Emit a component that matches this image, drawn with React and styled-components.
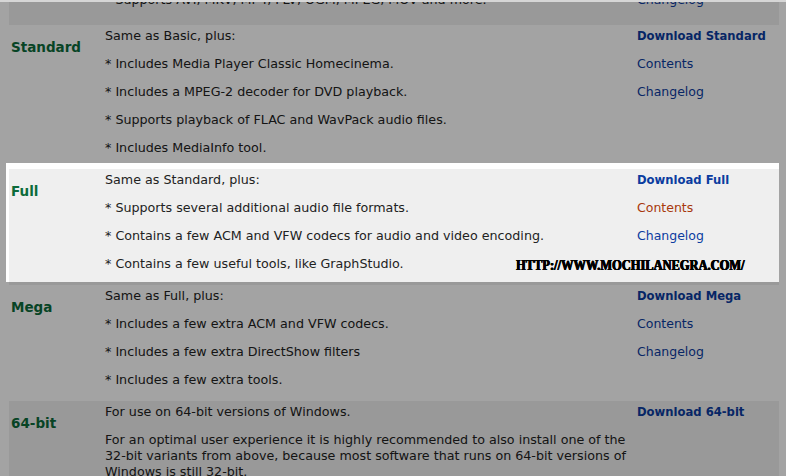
import React from "react";
import styled, { createGlobalStyle } from "styled-components";

const GlobalStyle = createGlobalStyle`
  html, body {
    margin: 0;
    padding: 0;
    background: #ffffff;
  }
  body {
    font-family: "DejaVu Sans", Verdana, sans-serif;
    color: #222222;
  }
`;

const packs = [
  {
    name: "Basic",
    alt: true,
    lines: [
      "Contains all the essential decoders and tools that are needed.",
      "* Plays the most common audio and video file formats.",
      "* Supports AVI, MKV, MP4, FLV, OGM, MPEG, MOV and more.",
    ],
    links: [
      { text: "Download Basic", bold: true },
      { text: "Contents" },
      { text: "Changelog" },
    ],
  },
  {
    name: "Standard",
    lines: [
      "Same as Basic, plus:",
      "* Includes Media Player Classic Homecinema.",
      "* Includes a MPEG-2 decoder for DVD playback.",
      "* Supports playback of FLAC and WavPack audio files.",
      "* Includes MediaInfo tool.",
    ],
    links: [
      { text: "Download Standard", bold: true },
      { text: "Contents" },
      { text: "Changelog" },
    ],
  },
  {
    name: "Full",
    alt: true,
    lines: [
      "Same as Standard, plus:",
      "* Supports several additional audio file formats.",
      "* Contains a few ACM and VFW codecs for audio and video encoding.",
      "* Contains a few useful tools, like GraphStudio.",
    ],
    links: [
      { text: "Download Full", bold: true },
      { text: "Contents", active: true },
      { text: "Changelog" },
    ],
  },
  {
    name: "Mega",
    lines: [
      "Same as Full, plus:",
      "* Includes a few extra ACM and VFW codecs.",
      "* Includes a few extra DirectShow filters",
      "* Includes a few extra tools.",
    ],
    links: [
      { text: "Download Mega", bold: true },
      { text: "Contents" },
      { text: "Changelog" },
    ],
  },
  {
    name: "64-bit",
    alt: true,
    lines: [
      "For use on 64-bit versions of Windows.",
      "For an optimal user experience it is highly recommended to also install one of the 32-bit variants from above, because most software that runs on 64-bit versions of Windows is still 32-bit.",
    ],
    links: [{ text: "Download 64-bit", bold: true }],
  },
];

const App = () => {
  return (
    <Viewport>
      <GlobalStyle />
      <PackTable>
        {packs.map((pack) => (
          <PackRow key={pack.name} $alt={pack.alt}>
            <PackName>{pack.name}</PackName>
            <Description>
              {pack.lines.map((line) => (
                <Line key={line}>{line}</Line>
              ))}
            </Description>
            <Links>
              {pack.links.map((link) => (
                <Line key={link.text}>
                  <PackLink href="#" $bold={link.bold} $active={link.active}>
                    {link.text}
                  </PackLink>
                </Line>
              ))}
            </Links>
          </PackRow>
        ))}
      </PackTable>

      <Spotlight />
      <Watermark>HTTP://WWW.MOCHILANEGRA.COM/</Watermark>
    </Viewport>
  );
};

const Viewport = styled.div`
  position: relative;
  height: 476px;
  overflow: hidden;
  border-top: 2px solid #d6d6d6;
  box-sizing: border-box;
`;

// page is scrolled: the Basic row sits mostly above the top edge
const PackTable = styled.div`
  margin: -69px 7px 0 9px;
  display: flex;
  flex-direction: column;
`;

const PackRow = styled.div`
  display: grid;
  grid-template-columns: 96px 532px 1fr;
  padding: 3px 0 1px;
  background: ${(p) => (p.$alt ? "#efefef" : "transparent")};

  &:first-child {
    padding-bottom: 5px;
  }
`;

const PackName = styled.div`
  padding: 11px 0 0 2px;
  font-size: 13.5px;
  line-height: 16px;
  font-weight: bold;
  color: #0c6b3a;
`;

const Description = styled.div`
  font-size: 12.7px;
  line-height: 16px;
  padding-right: 2px;
`;

const Links = styled.div`
  font-size: 12.5px;
  line-height: 16px;
`;

const Line = styled.p`
  margin: 0 0 12px;
`;

const PackLink = styled.a`
  text-decoration: none;
  color: ${(p) => (p.$active ? "#a8380c" : "#0b3ca0")};
  font-weight: ${(p) => (p.$bold ? "bold" : "normal")};
  font-size: ${(p) => (p.$bold ? "11.6px" : "12.5px")};
`;

const Spotlight = styled.div`
  position: absolute;
  left: 6px;
  top: 161px;
  width: 773px;
  height: 119px;
  box-shadow: 0 0 0 1200px rgba(0, 0, 0, 0.36);
  pointer-events: none;
  z-index: 2;
`;

const Watermark = styled.div`
  position: absolute;
  left: 516px;
  top: 255px;
  z-index: 3;
  font-family: "Liberation Serif", "Times New Roman", serif;
  font-weight: bold;
  font-size: 15px;
  line-height: 16px;
  color: #000000;
  white-space: nowrap;
  transform: scaleX(0.83);
  transform-origin: left center;
  text-shadow: 0.7px 0 0 #000000, -0.4px 0 0 #000000, 0 0.4px 0 #000000;
`;

export default App;
